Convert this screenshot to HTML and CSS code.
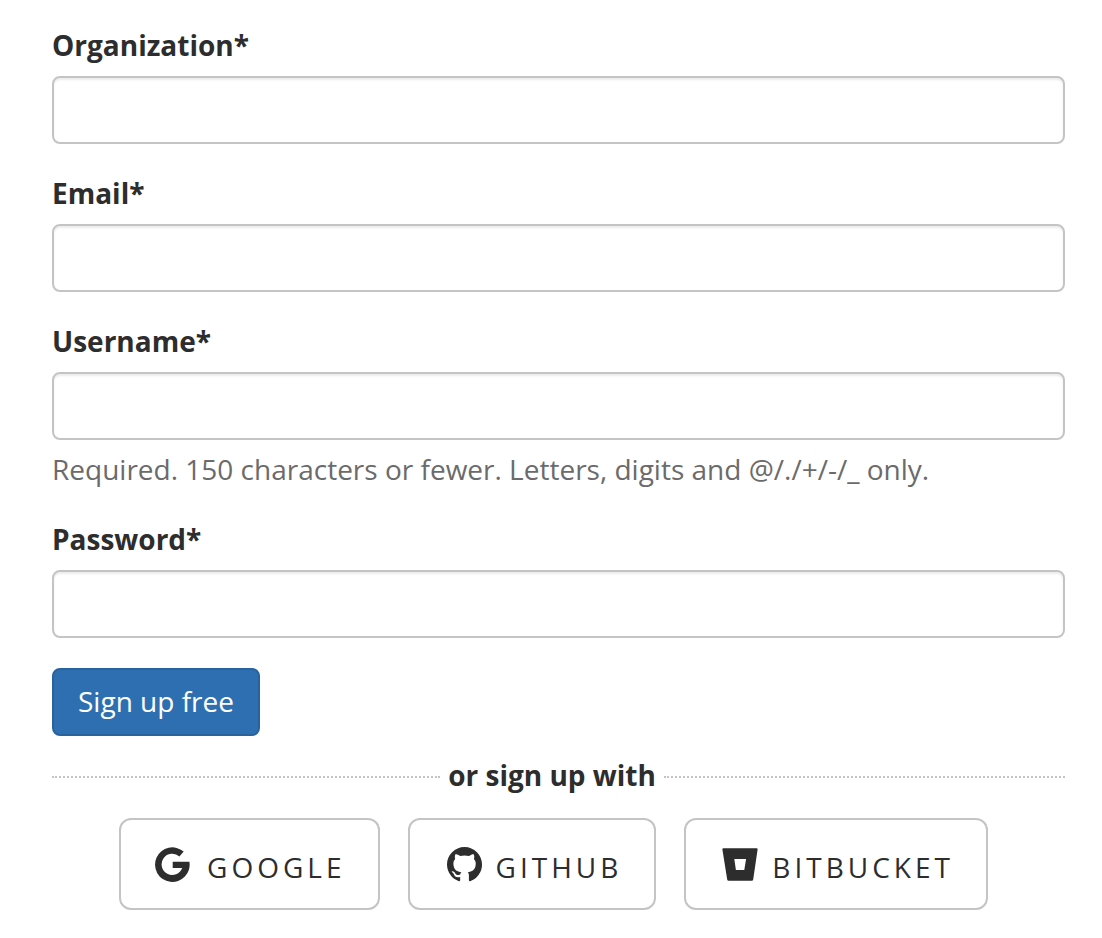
FILE: index.html
```html
<!DOCTYPE html>
<html lang="en">
<head>
<meta charset="utf-8">
<meta name="viewport" content="width=device-width, initial-scale=1">
<title>Sign up</title>
<link rel="stylesheet" href="styles.css">
</head>
<body>
<main class="signup">
  <form class="form">
    <div class="field">
      <label for="organization">Organization*</label>
      <input id="organization" type="text" required>
    </div>
    <div class="field">
      <label for="email">Email*</label>
      <input id="email" type="email" required>
    </div>
    <div class="field">
      <label for="username">Username*</label>
      <input id="username" type="text" maxlength="150" aria-describedby="username-help" required>
      <p class="help" id="username-help">Required. 150 characters or fewer. Letters, digits and @/./+/-/_ only.</p>
    </div>
    <div class="field">
      <label for="password">Password*</label>
      <input id="password" type="password" required>
    </div>
    <button class="submit" type="submit">Sign up free</button>
  </form>
  <div class="divider"><span>or sign up with</span></div>
  <div class="providers">
    <button class="provider" type="button">
      <svg viewBox="0 0 48 36" aria-hidden="true"><path d="M32.7 4.6L28.4 9.6A10.6 10.6 0 1 0 31.2 21H21.7V14.7H38.4A17.3 17.3 0 1 1 32.7 4.6Z"/></svg>
      <span>GOOGLE</span>
    </button>
    <button class="provider" type="button">
      <svg viewBox="0 0 48 36" aria-hidden="true"><path transform="translate(7 0) scale(2.19)" d="M8 0C3.58 0 0 3.58 0 8c0 3.54 2.29 6.53 5.47 7.59.4.07.55-.17.55-.38 0-.19-.01-.82-.01-1.49-2.01.37-2.53-.49-2.69-.94-.09-.23-.48-.94-.82-1.13-.28-.15-.68-.52-.01-.53.63-.01 1.08.58 1.23.82.72 1.21 1.87.87 2.33.66.07-.52.28-.87.51-1.07-1.78-.2-3.64-.89-3.64-3.95 0-.87.31-1.59.82-2.15-.08-.2-.36-1.02.08-2.12 0 0 .67-.21 2.2.82.64-.18 1.32-.27 2-.27s1.36.09 2 .27c1.53-1.04 2.2-.82 2.2-.82.44 1.1.16 1.92.08 2.12.51.56.82 1.27.82 2.15 0 3.07-1.87 3.75-3.65 3.95.29.25.54.73.54 1.48 0 1.07-.01 1.93-.01 2.2 0 .21.15.46.55.38A8.01 8.01 0 0 0 16 8c0-4.42-3.58-8-8-8Z"/></svg>
      <span>GITHUB</span>
    </button>
    <button class="provider" type="button">
      <svg viewBox="0 0 48 36" aria-hidden="true"><path fill-rule="evenodd" d="M7.3 1.3H40.7Q41.8 1.3 41.6 2.5L37.2 32.6Q37 33.8 35.8 33.8H12.6Q11.4 33.8 11.2 32.6L6.4 2.5Q6.2 1.3 7.3 1.3ZM18.3 12L19.9 23H28.3L30.1 12Z"/></svg>
      <span>BITBUCKET</span>
    </button>
  </div>
</main>
</body>
</html>
```
FILE: styles.css
```css
* {
  box-sizing: border-box;
}

body {
  margin: 0;
  background: #fff;
  color: #2d2d2d;
  font: 28px/38px "Open Sans", sans-serif;
}

button,
input {
  font: inherit;
  color: inherit;
}

button {
  cursor: pointer;
}

.signup {
  padding: 26px 37px 28px 52px;
}

.field {
  margin-bottom: 30px;
}

.field label {
  display: block;
  margin-bottom: 12px;
  font-weight: 700;
}

.field input {
  display: block;
  width: 100%;
  height: 68px;
  padding: 12px 24px;
  border: 2px solid #c4c4c4;
  border-radius: 8px;
  background: #fff;
  box-shadow: inset 0 2px 2px rgba(0, 0, 0, 0.075);
}

.help {
  margin: 10px 0 0;
  padding-bottom: 2px;
  color: #6b6b6b;
}

.submit {
  display: block;
  padding: 12px 24px 14px;
  border: 2px solid #29639e;
  border-radius: 8px;
  background: #2d6fb0;
  color: #fff;
}

.divider {
  display: flex;
  align-items: center;
  gap: 8px;
  margin-top: 20px;
  font-weight: 700;
}

.divider::before,
.divider::after {
  content: "";
  flex: 30;
  margin-top: 4px;
  border-top: 2px dotted #c4c4c4;
}

.divider::after {
  flex: 31;
}

.providers {
  display: flex;
  flex-wrap: wrap;
  justify-content: center;
  gap: 28px;
  margin-top: 24px;
  padding-right: 10px;
}

.provider {
  display: flex;
  align-items: flex-start;
  gap: 8px;
  padding: 27px 32px 21px 30px;
  border: 2px solid #c4c4c4;
  border-radius: 12px;
  background: #fff;
  line-height: 40px;
  letter-spacing: 4px;
}

.provider svg {
  width: 48px;
  height: 36px;
  fill: #2d2d2d;
}
```
